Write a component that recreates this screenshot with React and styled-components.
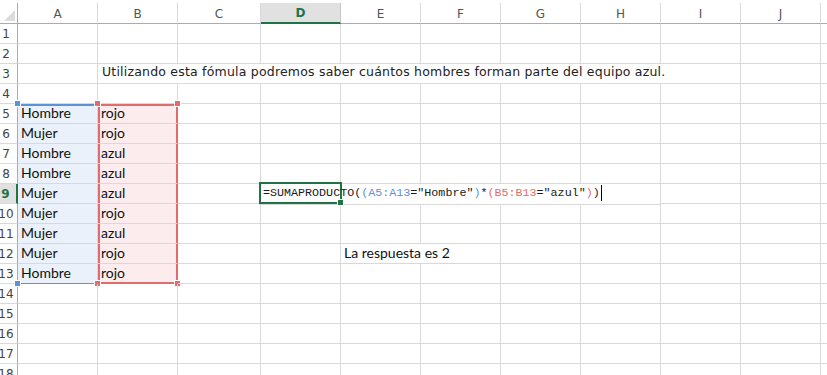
import React from 'react';
import styled, { createGlobalStyle, css } from 'styled-components';

const GlobalStyle = createGlobalStyle`
    html, body {
        margin: 0;
        padding: 0;
        background: #ffffff;
        overflow: hidden;
    }
`;

const GREEN = '#217346';
const GRID = '#d9d9d9';
const HEAD_LINE = '#ababab';

const columns = [
    { key: 'A', w: 80 },
    { key: 'B', w: 80 },
    { key: 'C', w: 83 },
    { key: 'D', w: 80 },
    { key: 'E', w: 80 },
    { key: 'F', w: 80 },
    { key: 'G', w: 80 },
    { key: 'H', w: 80 },
    { key: 'I', w: 80 },
    { key: 'J', w: 80 },
    { key: '', w: 7 },
];

const genders = ['Hombre', 'Mujer', 'Hombre', 'Hombre', 'Mujer', 'Mujer', 'Mujer', 'Mujer', 'Hombre'];
const teams = ['rojo', 'rojo', 'azul', 'azul', 'azul', 'rojo', 'azul', 'rojo', 'rojo'];

const rangeFills = {
    blue: '#eaf1fb',
    red: '#fdeced',
};

const rangeLines = {
    blue: '#5b93d9',
    red: '#e36b6b',
};

const Sheet = styled.div`
    display: grid;
    grid-template-columns: 18px ${columns.map(c => c.w + 'px').join(' ')};
    grid-template-rows: 21px;
    grid-auto-rows: 20px;
    padding-top: 3px;
    width: max-content;
    background: #ffffff;
`;

const Corner = styled.div`
    border-right: 1px solid ${HEAD_LINE};
    border-bottom: 1px solid ${HEAD_LINE};
    display: flex;
    align-items: flex-end;
    justify-content: flex-end;
    padding: 0 2px 2px 0;
`;

const Triangle = styled.div`
    width: 0;
    height: 0;
    border-left: 11px solid transparent;
    border-bottom: 11px solid #dcdcdc;
`;

const ColHead = styled.div`
    border-right: 1px solid ${p => (p.$active ? '#c6c6c6' : GRID)};
    border-bottom: ${p => (p.$active ? `2px solid ${GREEN}` : `1px solid ${HEAD_LINE}`)};
    background: ${p => (p.$active ? '#e1e1e1' : '#ffffff')};
    color: ${p => (p.$active ? GREEN : '#555555')};
    font-family: "DejaVu Sans", sans-serif;
    font-size: 12px;
    font-weight: ${p => (p.$active ? 700 : 400)};
    display: flex;
    align-items: center;
    justify-content: center;
    padding-top: 1px;
`;

const RowHead = styled.div`
    border-right: ${p => (p.$active ? `2px solid ${GREEN}` : `1px solid ${HEAD_LINE}`)};
    border-bottom: 1px solid ${GRID};
    background: ${p => (p.$active ? '#e1e1e1' : '#ffffff')};
    color: ${p => (p.$active ? GREEN : '#444444')};
    font-family: "DejaVu Sans", sans-serif;
    font-size: 12px;
    font-weight: ${p => (p.$active ? 700 : 400)};
    display: flex;
    align-items: center;
    justify-content: center;
    padding-right: 5px;
    padding-top: 1px;
    white-space: nowrap;
`;

const Cell = styled.div`
    grid-column: span ${p => p.$span || 1};
    position: relative;
    border-right: 1px solid ${GRID};
    border-bottom: 1px solid ${GRID};
    background: ${p => rangeFills[p.$range] || 'transparent'};
    display: flex;
    align-items: flex-end;
    padding: 0 3px 1px;
    white-space: nowrap;
    font-family: Lato, "Open Sans", sans-serif;
    font-size: 14px;
    line-height: 18px;
    color: #111111;

    ${p => p.$range === 'red' && css`
        box-shadow:
            inset 2px 0 0 ${rangeLines.red},
            inset -1px 0 0 ${rangeLines.red}
            ${p.$first ? `, inset 0 2px 0 ${rangeLines.red}` : ''}
            ${p.$last ? `, inset 0 -1px 0 ${rangeLines.red}` : ''};
        border-right-color: ${rangeLines.red};
        ${p.$last && `border-bottom-color: ${rangeLines.red};`}
    `}

    ${p => p.$range === 'blue' && css`
        box-shadow:
            ${p.$first ? `inset 0 2px 0 ${rangeLines.blue}` : 'none'}
            ${p.$last ? `, inset 0 -1px 0 ${rangeLines.blue}` : ''};
        ${p.$last && `border-bottom-color: ${rangeLines.blue};`}
    `}
`;

const Note = styled.span`
    font-family: "DejaVu Sans", sans-serif;
    font-size: 12.5px;
    letter-spacing: 0.2px;
    color: #222222;
    padding-left: 1px;
    padding-bottom: 1px;
`;

const Handle = styled.span`
    position: absolute;
    width: 5px;
    height: 5px;
    background: ${p => rangeLines[p.$color]};
    border: 1px solid #ffffff;
    ${p => (p.$top ? 'top: -4px;' : 'bottom: -4px;')}
    ${p => (p.$left ? 'left: -4px;' : 'right: -4px;')}
`;

const EditCell = styled.div`
    grid-column: span ${p => p.$span};
    border-right: 1px solid ${GRID};
    border-bottom: 1px solid ${GRID};
    display: flex;
    margin: -2px 0 -1px -2px;
    position: relative;
    z-index: 1;
`;

const EditBox = styled.div`
    position: relative;
    flex: none;
    box-sizing: border-box;
    width: 83px;
    border: 2px solid ${GREEN};
    display: flex;
    align-items: center;
    padding-left: 2px;
    white-space: nowrap;
    overflow: visible;
`;

const FillHandle = styled.span`
    position: absolute;
    right: -4px;
    bottom: -4px;
    width: 5px;
    height: 5px;
    background: ${GREEN};
    border: 1px solid #ffffff;
`;

const Formula = styled.span`
    font-family: "Liberation Mono", monospace;
    font-size: 11.7px;
    color: #1a1a1a;
    display: flex;
    align-items: center;
`;

const Token = styled.span`
    color: ${p => (p.$tone ? rangeLines[p.$tone] : '#1a1a1a')};
`;

const Caret = styled.span`
    display: inline-block;
    width: 1px;
    height: 16px;
    background: #000000;
    margin-left: 1px;
`;

const formula = [
    ['=SUMAPRODUCTO(', null],
    ['(', 'blue'],
    ['A5:A13', 'blue'],
    ['="Hombre"', null],
    [')', 'blue'],
    ['*', null],
    ['(', 'red'],
    ['B5:B13', 'red'],
    ['="azul"', null],
    [')', 'red'],
    [')', null],
];

function buildRow(r) {
    const cells = {};
    if (r === 3) {
        cells.B = { span: 8, note: 'Utilizando esta fómula podremos saber cuántos hombres forman parte del equipo azul.' };
    }
    if (r >= 5 && r <= 13) {
        const i = r - 5;
        cells.A = { text: genders[i], range: 'blue', first: r === 5, last: r === 13 };
        cells.B = { text: teams[i], range: 'red', first: r === 5, last: r === 13 };
    }
    if (r === 9) {
        cells.D = { span: 5, edit: true };
    }
    if (r === 12) {
        cells.E = { span: 2, text: 'La respuesta es 2' };
    }
    return cells;
}

function RangeHandles({ range, first, last }) {
    if (range === 'red') {
        return (
            <>
                {first && <Handle $color="red" $top $left />}
                {first && <Handle $color="red" $top />}
                {last && <Handle $color="red" $left />}
                {last && <Handle $color="red" />}
            </>
        );
    }
    if (range === 'blue') {
        return (
            <>
                {first && <Handle $color="blue" $top $left />}
                {last && <Handle $color="blue" $left />}
            </>
        );
    }
    return null;
}

function Row({ r }) {
    const cells = buildRow(r);
    const out = [];
    let skip = 0;
    columns.forEach((col, idx) => {
        if (skip > 0) {
            skip--;
            return;
        }
        const c = cells[col.key];
        if (!c) {
            out.push(<Cell key={idx} />);
            return;
        }
        skip = (c.span || 1) - 1;
        if (c.edit) {
            out.push(
                <EditCell key={idx} $span={c.span}>
                    <EditBox>
                        <Formula>
                            {formula.map(([t, tone], i) => <Token key={i} $tone={tone}>{t}</Token>)}
                            <Caret />
                        </Formula>
                        <FillHandle />
                    </EditBox>
                </EditCell>
            );
            return;
        }
        out.push(
            <Cell key={idx} $span={c.span} $range={c.range} $first={c.first} $last={c.last}>
                {c.note ? <Note>{c.note}</Note> : c.text}
                <RangeHandles range={c.range} first={c.first} last={c.last} />
            </Cell>
        );
    });
    return (
        <>
            <RowHead $active={r === 9}>{r}</RowHead>
            {out}
        </>
    );
}

export default function App() {
    const rows = Array.from({ length: 18 }, (_, i) => i + 1);
    return (
        <>
            <GlobalStyle />
            <Sheet>
                <Corner><Triangle /></Corner>
                {columns.map((c, i) => <ColHead key={i} $active={c.key === 'D'}>{c.key}</ColHead>)}
                {rows.map(r => <Row key={r} r={r} />)}
            </Sheet>
        </>
    );
}
